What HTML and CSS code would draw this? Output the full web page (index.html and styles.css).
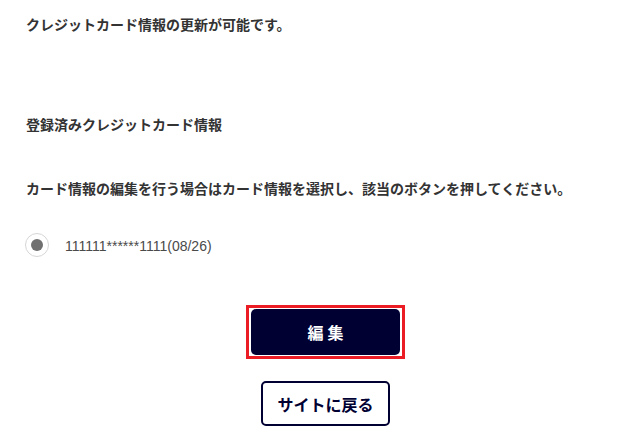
FILE: index.html
```html
<!DOCTYPE html>
<html lang="ja">
<head>
<meta charset="utf-8">
<link rel="stylesheet" href="styles.css">
</head>
<body>
<main class="page">
  <p class="lead">クレジットカード情報の更新が可能です。</p>
  <h2 class="section-title">登録済みクレジットカード情報</h2>
  <p class="note">カード情報の編集を行う場合はカード情報を選択し、該当のボタンを押してください。</p>
  <label class="card-row">
    <span class="radio"><span class="radio-dot"></span></span>
    <span class="card-number">111111******1111(08/26)</span>
  </label>
  <div class="actions">
    <div class="focus-ring">
      <button class="btn btn-primary" type="button">編集</button>
    </div>
    <button class="btn btn-secondary" type="button">サイトに戻る</button>
  </div>
</main>
</body>
</html>
```
FILE: styles.css
```css
html, body {
  margin: 0;
  padding: 0;
  background: #ffffff;
}

body {
  font-family: "Noto Sans CJK JP", "Noto Sans", sans-serif;
  color: #333333;
}

.page {
  padding: 0 14px 0 26px;
}

.lead,
.section-title,
.note {
  font-size: 14px;
  font-weight: 700;
  line-height: 20px;
  margin: 0;
  color: #333333;
}

.lead {
  padding-top: 14px;
}

.section-title {
  margin-top: 80px;
}

.note {
  margin-top: 44px;
}

.card-row {
  display: flex;
  align-items: center;
  gap: 16px;
  margin-top: 35px;
  height: 24px;
}

.radio {
  width: 24px;
  height: 24px;
  box-sizing: border-box;
  border: 1px solid #d6d6d6;
  border-radius: 50%;
  display: flex;
  align-items: center;
  justify-content: center;
  margin-left: -1px;
}

.radio-dot {
  width: 12px;
  height: 12px;
  border-radius: 50%;
  background: #707070;
}

.card-number {
  font-family: "Liberation Sans", Arial, sans-serif;
  font-size: 14px;
  color: #4a4a4a;
  line-height: 20px;
  padding-top: 2px;
}

.actions {
  display: flex;
  flex-direction: column;
  align-items: center;
  margin-top: 48px;
  gap: 22px;
}

.focus-ring {
  border: 3px solid #ec1c24;
  padding: 1px 2px;
  display: flex;
}

.btn {
  font-family: "Noto Sans CJK JP", "Noto Sans", sans-serif;
  font-weight: 700;
  font-size: 16px;
  box-sizing: border-box;
  border-radius: 5px;
  cursor: pointer;
  padding: 0;
}

.btn-primary {
  width: 149px;
  height: 46px;
  background: #000033;
  color: #ffffff;
  border: none;
  letter-spacing: 4px;
  text-indent: 4px;
}

.btn-secondary {
  width: 129px;
  height: 45px;
  background: #ffffff;
  color: #000033;
  border: 2px solid #000033;
}
```
